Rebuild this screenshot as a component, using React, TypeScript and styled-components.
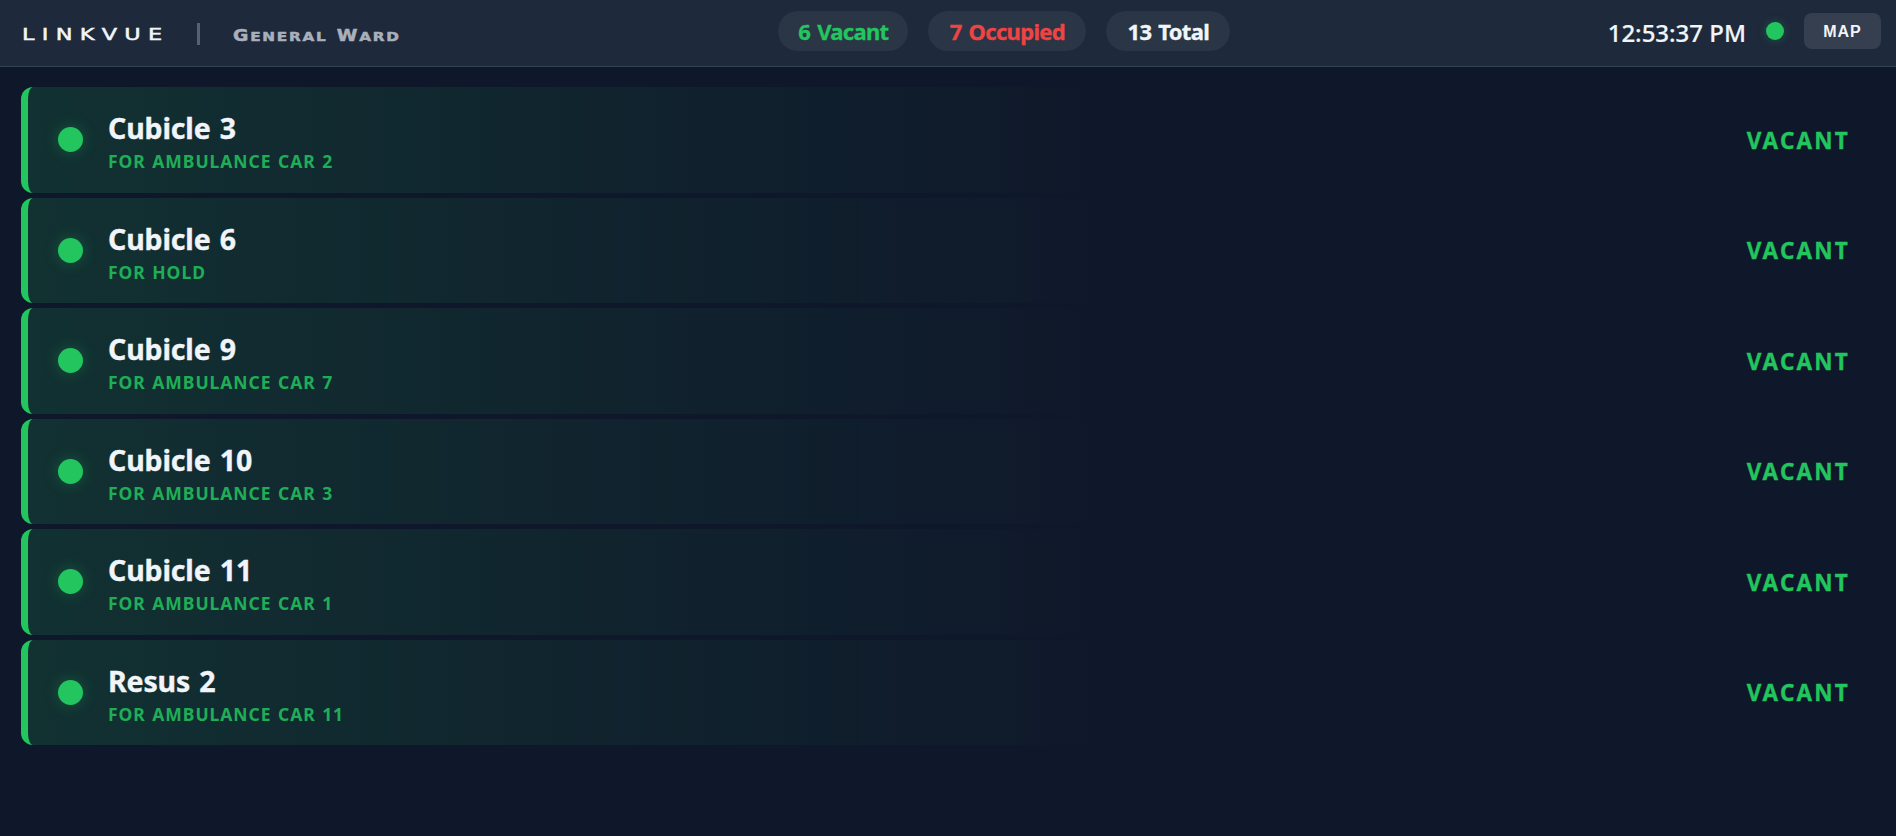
import * as React from "react";
import styled, { createGlobalStyle, css } from "styled-components";

const GlobalStyle = createGlobalStyle`
  * {
    box-sizing: border-box;
  }

  body {
    margin: 0;
    background: #0f172a;
    overflow: hidden;
  }
`;

const fontStyle = css`
  font-family: "Segoe UI", "Noto Sans", "Open Sans", sans-serif;
  line-height: 1;
  white-space: nowrap;
`;

const heavyStyle = css`
  font-weight: 700;
  -webkit-text-stroke: 0.35px currentColor;
`;

const Page = styled.div`
  ${fontStyle};
  display: flex;
  flex-direction: column;
  height: 100vh;
  background: #0f172a;
  color: #f1f5f9;
`;

const Header = styled.header`
  display: flex;
  align-items: center;
  justify-content: space-between;
  height: 67px;
  padding: 0 15px 4px 22px;
  background: #1e293b;
  border-bottom: 1px solid #334155;
`;

const Brand = styled.div`
  display: flex;
  align-items: center;
  width: 379px;
  padding-top: 6px;
`;

const Logo = styled.div`
  width: 175px;
  padding-top: 2px;
  font-family: "DejaVu Sans", sans-serif;
  font-size: 16px;
  letter-spacing: 5.2px;
  -webkit-text-stroke: 0.5px #f1f5f9;
  transform: scaleX(1.4);
  transform-origin: left;
`;

const Divider = styled.div`
  width: 3px;
  height: 22px;
  margin-right: 33px;
  background: #566173;
`;

const WardName = styled.div`
  display: flex;
  align-items: baseline;
  gap: 7.5px;
  padding-top: 5px;
  font-family: "DejaVu Sans", sans-serif;
  font-size: 12.2px;
  font-weight: 700;
  letter-spacing: 1.4px;
  color: #a8b0bc;
  -webkit-text-stroke: 0.5px #a8b0bc;
  transform: scaleX(1.25);
  transform-origin: left;
`;

const Word = styled.div`
  text-transform: uppercase;

  &::first-letter {
    font-size: 15px;
  }
`;

const Stats = styled.div`
  display: flex;
  gap: 20px;
`;

const Pill = styled.div<{ $color: string; $width: number }>`
  ${heavyStyle};
  display: flex;
  align-items: center;
  justify-content: center;
  width: ${p => p.$width}px;
  height: 40px;
  border-radius: 20px;
  background: #2a3545;
  color: ${p => p.$color};
  font-size: 22px;
  letter-spacing: -0.7px;
  word-spacing: 2px;
`;

const Controls = styled.div`
  display: flex;
  align-items: center;
`;

const Clock = styled.div`
  margin-right: 20px;
  padding-top: 3px;
  font-size: 24px;
  font-weight: 500;
  -webkit-text-stroke: 0.2px currentColor;
`;

const Online = styled.div`
  width: 18px;
  height: 18px;
  margin-right: 20px;
  border-radius: 50%;
  background: #22c55e;
  box-shadow: 0 0 10px rgba(34, 197, 94, 0.3);
`;

const MapButton = styled.button`
  width: 77px;
  height: 36px;
  padding: 2px 0 0;
  border: 0;
  border-radius: 8px;
  background: #353f4f;
  color: #f1f5f9;
  font-family: "Liberation Sans", Arial, sans-serif;
  font-size: 16px;
  font-weight: 700;
  letter-spacing: 1px;
`;

const List = styled.main`
  display: flex;
  flex-direction: column;
  gap: 5px;
  padding: 20px 21px;
`;

const Row = styled.div`
  display: flex;
  align-items: center;
  height: 105.5px;
  padding: 0 25px 0 30px;
  border-left: 7px solid #22c55e;
  border-radius: 12px;
  background: linear-gradient(
    90deg,
    rgba(34, 197, 94, 0.15) 0%,
    rgba(34, 197, 94, 0) 60%
  );
`;

const StatusDot = styled.div`
  width: 25px;
  height: 25px;
  margin-right: 25px;
  border-radius: 50%;
  background: #22c55e;
  box-shadow: 0 0 15px rgba(34, 197, 94, 0.3);
`;

const Info = styled.div`
  flex: 1;
  padding-top: 4px;
`;

const BedName = styled.div`
  ${heavyStyle};
  font-size: 28.5px;
  line-height: 36px;
  letter-spacing: -0.15px;
  word-spacing: 2px;
`;

const Purpose = styled.div`
  margin-top: 3px;
  color: #22c55e;
  font-size: 17.5px;
  font-weight: 700;
  line-height: 24px;
  letter-spacing: 0.95px;
  word-spacing: 1px;
  opacity: 0.85;
`;

const Status = styled.div`
  ${heavyStyle};
  padding-top: 2px;
  color: #22c55e;
  font-size: 22.5px;
  letter-spacing: 2.2px;
`;

const beds = [
  { name: "Cubicle 3", purpose: "FOR AMBULANCE CAR 2" },
  { name: "Cubicle 6", purpose: "FOR HOLD" },
  { name: "Cubicle 9", purpose: "FOR AMBULANCE CAR 7" },
  { name: "Cubicle 10", purpose: "FOR AMBULANCE CAR 3" },
  { name: "Cubicle 11", purpose: "FOR AMBULANCE CAR 1" },
  { name: "Resus 2", purpose: "FOR AMBULANCE CAR 11" }
];

type BedProps = {
  name: string;
  purpose: string;
};

const Bed = ({ name, purpose }: BedProps) => (
  <Row>
    <StatusDot />
    <Info>
      <BedName>{name}</BedName>
      <Purpose>{purpose}</Purpose>
    </Info>
    <Status>VACANT</Status>
  </Row>
);

const App = () => (
  <Page>
    <GlobalStyle />
    <Header>
      <Brand>
        <Logo>LINKVUE</Logo>
        <Divider />
        <WardName>
          <Word>General</Word>
          <Word>Ward</Word>
        </WardName>
      </Brand>
      <Stats>
        <Pill $color="#22c55e" $width={130}>
          6 Vacant
        </Pill>
        <Pill $color="#ef4444" $width={158}>
          7 Occupied
        </Pill>
        <Pill $color="#f1f5f9" $width={124}>
          13 Total
        </Pill>
      </Stats>
      <Controls>
        <Clock>12:53:37 PM</Clock>
        <Online />
        <MapButton>MAP</MapButton>
      </Controls>
    </Header>
    <List>
      {beds.map(bed => (
        <Bed key={bed.name} {...bed} />
      ))}
    </List>
  </Page>
);

export default App;
